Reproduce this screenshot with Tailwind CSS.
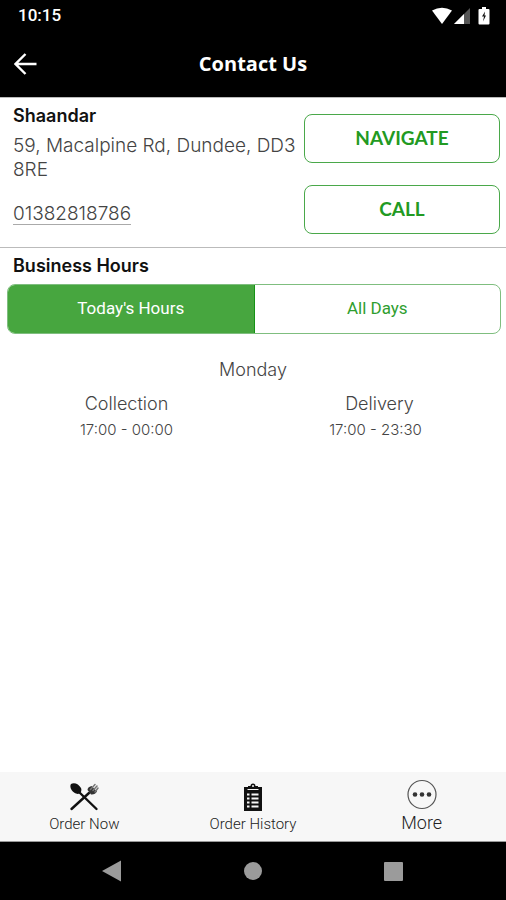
<!DOCTYPE html>
<html lang="en">
<head>
<meta charset="utf-8">
<meta name="viewport" content="width=device-width, initial-scale=1">
<title>Contact Us</title>
<script src="https://cdn.jsdelivr.net/npm/@tailwindcss/browser@4"></script>
</head>
<body class="flex min-h-screen flex-col bg-white font-['Inter',sans-serif] text-[#444]">
<header class="bg-black text-white">
  <div class="flex h-8 items-center justify-between pr-4 pl-[18px]">
    <time class="font-['Roboto',sans-serif] text-[17px] font-medium">10:15</time>
    <div class="flex items-center">
      <svg class="h-[18px] w-5" viewBox="0 0 20 18" fill="#fff" aria-label="Wi-Fi"><path d="M0 3.500Q10-2 20 3.500L10 17z"/></svg>
      <svg class="ml-0.5 h-[18px] w-4" viewBox="0 0 16 18" aria-label="Signal"><path d="M0 17 16 1v16z" fill="#555"/><path d="M0 17 10 7v10z" fill="#fff"/></svg>
      <svg class="ml-2 h-[18px] w-3" viewBox="0 0 12 18" aria-label="Battery charging"><path d="M4 0h4v2h2.500q1 0 1 1v13.500q0 1-1 1h-9q-1 0-1-1V3q0-1 1-1H4z" fill="#fff"/><path d="M7 4.500 4 9.500h2L5 14.500l3-6H6.500z" fill="#111"/></svg>
    </div>
  </div>
  <div class="grid h-[65px] grid-cols-[1fr_auto_1fr] items-center px-[14px] pb-[2px]">
    <button class="flex size-6 items-center" aria-label="Back">
      <svg class="h-6 w-6" viewBox="0 0 24 24" fill="none" stroke="#fff" stroke-width="2.400"><path d="M11.500 2 1.500 12l10 10M2 12h20.500"/></svg>
    </button>
    <h1 class="font-['Open_Sans',sans-serif] text-[20px] font-bold">Contact Us</h1>
  </div>
</header>
<main class="flex-1">
  <section class="flex border-y border-[#bbb] pr-[6px] pl-[13px]">
    <div class="flex-1 pt-1">
      <h2 class="text-[18px] leading-7 font-semibold text-[#111]">Shaandar</h2>
      <address class="mt-1 text-[19px] leading-6 font-light not-italic">59, Macalpine Rd, Dundee, DD3 8RE</address>
      <a href="tel:01382818786" class="mt-[22px] inline-block border-b border-[#aaa] text-[19px] leading-5 font-light">01382818786</a>
    </div>
    <div class="flex w-[196px] shrink-0 flex-col gap-[22px] pt-4 pb-[13px] font-['Lato',sans-serif] text-[19px] font-bold text-[#229a22]">
      <button class="h-[49px] rounded-lg border border-[#4aa84a]">NAVIGATE</button>
      <button class="h-[49px] rounded-lg border border-[#4aa84a]">CALL</button>
    </div>
  </section>
  <section>
    <h2 class="pt-1 pl-[13px] text-[18px] leading-7 font-semibold text-[#111]">Business Hours</h2>
    <div class="mt-1 mr-[5px] ml-[7px] flex h-[50px] overflow-hidden rounded-lg border border-[#7fbe7f] font-['Roboto',sans-serif] text-[17px]">
      <button class="flex-1 border-r border-[#159315] bg-[#47a63f] text-white">Today's Hours</button>
      <button class="flex-1 text-[#2f9e2f]">All Days</button>
    </div>
    <h3 class="mt-6 text-center text-[18px] leading-6 font-light">Monday</h3>
    <dl class="mt-[10px] flex text-center font-light">
      <div class="flex-1"><dt class="text-[18px] leading-6">Collection</dt><dd class="text-[15px] leading-7">17:00 - 00:00</dd></div>
      <div class="flex-1"><dt class="text-[18px] leading-6">Delivery</dt><dd class="pr-2 text-[15px] leading-7">17:00 - 23:30</dd></div>
    </dl>
  </section>
</main>
<nav class="grid h-[70px] grid-cols-3 border-b border-[#999] bg-[#f7f7f7] font-['Roboto',sans-serif] text-[15px] font-light text-[#222]">
  <a href="#" class="flex flex-col items-center pt-[10px]">
    <svg class="h-[30px] w-[30px]" viewBox="0 0 30 30" fill="none" stroke="#111" stroke-linecap="round">
      <path d="M10 10 27.500 27" stroke-width="2.400"/><path d="M20 11 2.500 27" stroke-width="2.400"/>
      <path d="M2 2C5-.2 10 2 12 6c1.500 4-1.500 7-5 5.500C3 10 0 5 2 2z" fill="#111" stroke="none"/>
      <path d="m18.500 8 3.500 4.500q4 .5 6-3L22.500 4q-4 1-4 4z" fill="#333" stroke="none"/><path d="m21.500 7.500 4.500-5M24 8.500l4-4.500M26 10l3-4" stroke="#777" stroke-width="1.500"/>
    </svg>
    <span class="leading-6">Order Now</span>
  </a>
  <a href="#" class="flex flex-col items-center pt-[10px]">
    <svg class="h-[30px] w-[20px]" viewBox="0 0 20 30"><path d="M1 5H5V4h2.500a2.500 2.500 0 0 1 5 0H15v1h4v24H1z" fill="#111"/><path d="M4.500 7.500h11" stroke="#f7f7f7"/><path d="M4 12.500h2.500m-2.500 4h2.500m-2.500 4h2.500m-2.500 4h2.500M8.500 12.500h7m-7 4h7m-7 4h7m-7 4h7" stroke="#f7f7f7" stroke-width="1.800"/><circle cx="10" cy="4" r="1" fill="#f7f7f7"/></svg>
    <span class="leading-6">Order History</span>
  </a>
  <a href="#" class="flex flex-col items-center pt-[7px]">
    <svg class="h-8 w-8" viewBox="0 0 32 32"><circle cx="16" cy="15.500" r="14" fill="none" stroke="#555" stroke-width="1.200"/><g fill="#333"><circle cx="9" cy="15.500" r="2.300"/><circle cx="16" cy="15.500" r="2.300"/><circle cx="23" cy="15.500" r="2.300"/></g></svg>
    <span class="text-[18px] leading-6">More</span>
  </a>
</nav>
<footer class="grid h-[58px] grid-cols-3 items-center justify-items-center bg-black">
  <button class="ml-14" aria-label="System back"><svg class="h-[22px] w-5" viewBox="0 0 20 22" fill="#9b9b9b"><path d="M0 11 19 .5v21z"/></svg></button>
  <button class="size-[18px] rounded-full bg-[#9b9b9b]" aria-label="Home"></button>
  <button class="mr-14 size-[19px] rounded-[1px] bg-[#9b9b9b]" aria-label="Recent apps"></button>
</footer>
</body>
</html>
